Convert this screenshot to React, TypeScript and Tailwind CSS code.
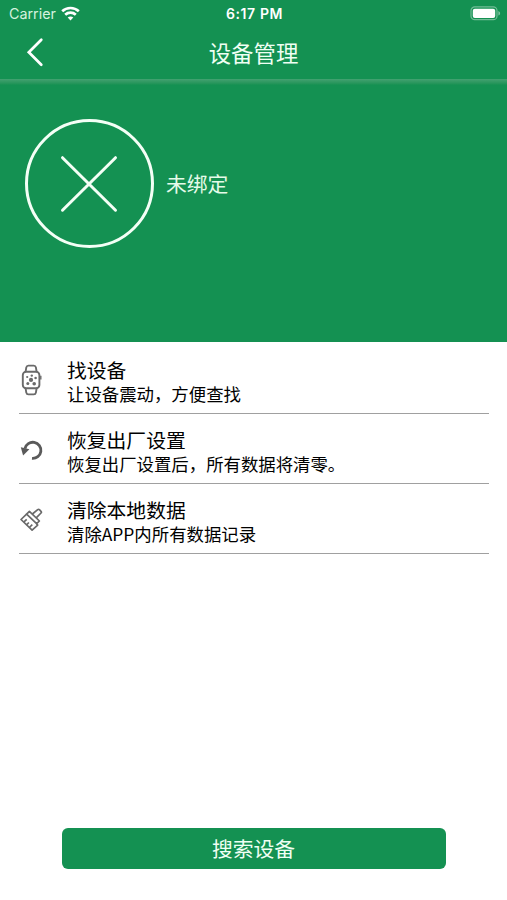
import type { ReactNode } from "react";

interface ActionRowProps {
  icon: ReactNode;
  title: string;
  description: string;
}

function WifiIcon() {
  return (
    <svg width="19" height="15" viewBox="0 0 19 15" fill="none" stroke="#fff" strokeWidth="2.7">
      <path d="M1.2 5.2C5.8.9 13.2.9 17.8 5.2" />
      <path d="M4.2 8.8c3-2.8 7.6-2.8 10.6 0" />
      <path d="M9.5 14.4 6.7 11.6c1.6-1.4 4-1.4 5.6 0z" fill="#fff" stroke="none" />
    </svg>
  );
}

function BatteryIcon() {
  return (
    <svg width="31" height="15" viewBox="0 0 31 15" fill="none">
      <rect x="1" y="0.9" width="26" height="12.8" rx="3.8" stroke="#fff" strokeOpacity="0.4" strokeWidth="1.2" />
      <rect x="2.8" y="2.7" width="22.4" height="9.2" rx="2" fill="#fff" />
      <path d="M28.4 5v4.6c1-.4 1.7-1.3 1.7-2.3s-.7-1.9-1.7-2.3z" fill="#fff" fillOpacity="0.45" />
    </svg>
  );
}

function WatchIcon() {
  return (
    <svg width="24" height="34" viewBox="0 0 24 34" fill="none" stroke="#6a6a6a" strokeWidth="1.9">
      <path d="M6.6 8.7 7.3 4.4Q7.7 2.6 9.4 2.6h5.4q1.7 0 2.1 1.8l.7 4.3M6.6 25.3l.7 4.3q.4 1.8 2.1 1.8h5.4q1.7 0 2.1-1.8l.7-4.3" />
      <rect x="3.8" y="8.7" width="16.6" height="16.6" rx="3.4" />
      <path d="M21.8 12.8v3.6" strokeWidth="1.4" />
      <g fill="#6a6a6a" stroke="none">
        <circle cx="12" cy="16.9" r="2.1" />
        <circle cx="12.8" cy="12.6" r="1.2" />
        <circle cx="8.2" cy="14" r="1.1" />
        <circle cx="16.6" cy="15" r="1.3" />
        <circle cx="8.8" cy="20.6" r="1.5" />
        <circle cx="15.2" cy="20.8" r="1.8" />
      </g>
    </svg>
  );
}

function ResetIcon() {
  return (
    <svg width="24" height="24" viewBox="0 0 24 24" fill="none">
      <path d="M5.9 10.6A8.1 8.1 0 1 1 13 20.4" stroke="#5a5a5a" strokeWidth="2.8" />
      <path d="M1.8 9.3 10.4 11.2 4.1 17.4z" fill="#5a5a5a" />
    </svg>
  );
}

function BrushIcon() {
  return (
    <svg width="24" height="24" viewBox="0 0 24 24" fill="none" stroke="#6a6a6a" strokeWidth="1.7" strokeLinejoin="round">
      <path d="m10.4 3.3 10 9.7-2.8 2.7-10-9.5z" />
      <path d="m13.4 6 5.3-4.4q.9-.7 1.7.1l1.6 1.6q.8.9 0 1.7L17.2 9.9" />
      <path d="M7.6 6.2 2 11.5l11.1 10.7 5.6-5.1-1.2-1.4" />
      <path d="m4.7 14.1 3-2.8M7.5 16.8l2.4-2.3M10.3 19.5l3-2.8" />
    </svg>
  );
}

function ActionRow({ icon, title, description }: ActionRowProps) {
  return (
    <div className="flex h-[70px] items-center border-b-[1.5px] border-[#a0a0a0]">
      <div className="flex w-[48px] justify-start pt-[3px]">{icon}</div>
      <div className="pt-[4px] text-black">
        <div className="text-[19.8px] leading-[25px]">{title}</div>
        <div className="text-[17.4px] leading-[23px]">{description}</div>
      </div>
    </div>
  );
}

export default function App() {
  return (
    <div className="flex h-[900px] w-[507px] flex-col bg-white font-['Noto_Sans_CJK_SC',sans-serif]">
      <header className="h-[79px] bg-[#149152] text-white">
        <div className="grid h-[27px] grid-cols-3 items-center pr-[6px] pl-[9px] font-['Inter',sans-serif]">
          <div className="flex items-center gap-[5px] text-[14.3px] text-[#d5f2df]">
            <span>Carrier</span>
            <WifiIcon />
          </div>
          <div className="pr-[1px] text-center text-[14px] font-semibold tracking-[0.6px]">6:17 PM</div>
          <div className="flex justify-end">
            <BatteryIcon />
          </div>
        </div>
        <div className="grid h-[50px] grid-cols-3 items-center">
          <svg className="ml-[26px]" width="18" height="30" viewBox="0 0 18 30" fill="none" stroke="#fff" strokeWidth="2.7" strokeLinecap="round">
            <path d="M15.3 2.8 2.8 15.2l12.5 12.6" />
          </svg>
          <h1 className="text-center text-[22.4px] leading-[30px] text-[#effff3]">设备管理</h1>
        </div>
      </header>

      <section className="h-[263px] bg-[#149152]">
        <div className="h-[6px] bg-linear-to-b from-[#43a171] to-[#149152]" />
        <div className="flex items-center gap-[12px] pt-[34px] pl-[25px]">
          <svg width="129" height="129" viewBox="0 0 129 129" fill="none" stroke="#f4fff6" strokeWidth="3" strokeLinecap="round">
            <circle cx="64.5" cy="64.5" r="63" />
            <path d="m37.5 38.7 53 52.5M90.5 38.7l-53 52.5" />
          </svg>
          <span className="text-[20.8px] text-[#e5fbe9]">未绑定</span>
        </div>
      </section>

      <main className="pt-[2px] pr-[18px] pl-[19px]">
        <ActionRow icon={<WatchIcon />} title="找设备" description="让设备震动，方便查找" />
        <ActionRow icon={<ResetIcon />} title="恢复出厂设置" description="恢复出厂设置后，所有数据将清零。" />
        <ActionRow icon={<BrushIcon />} title="清除本地数据" description="清除APP内所有数据记录" />
      </main>

      <button className="mx-auto mt-auto mb-[31px] h-[41px] w-[384px] rounded-[6px] bg-[#149152] text-[20.8px] text-[#effff3]">
        搜索设备
      </button>
    </div>
  );
}
